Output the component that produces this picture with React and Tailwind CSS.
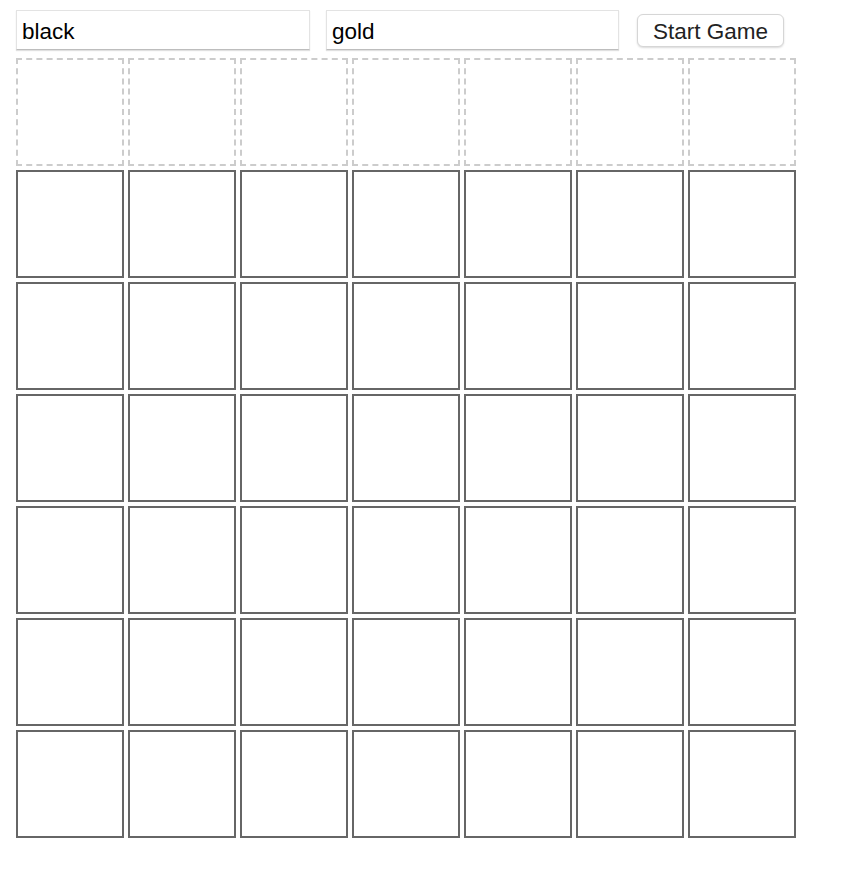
export default function App() {
  const cols = [0, 1, 2, 3, 4, 5, 6];
  const rows = [0, 1, 2, 3, 4, 5];
  return (
    <div className="bg-white w-[846px] h-[876px]" style={{ fontFamily: '"Liberation Sans", Arial, sans-serif' }}>
      <div className="flex items-center pl-4 pt-[10px] h-[50px]">
        <input
          defaultValue="black"
          className="w-[294px] h-[40px] border border-[#e3e3e3] border-b-[#bdbdbd] shadow-[0_1px_1px_rgba(0,0,0,0.12)] pl-[5px] pt-[4px] text-[22.5px] text-black outline-none"
          style={{ fontFamily: '"Liberation Sans", Arial, sans-serif' }}
        />
        <input
          defaultValue="gold"
          className="ml-4 w-[293px] h-[40px] border border-[#e3e3e3] border-b-[#bdbdbd] shadow-[0_1px_1px_rgba(0,0,0,0.12)] pl-[5px] pt-[4px] text-[22.5px] text-black outline-none"
          style={{ fontFamily: '"Liberation Sans", Arial, sans-serif' }}
        />
        <button className="ml-[18px] w-[147px] h-[33px] rounded-[6px] border border-[#d6d6d6] bg-white shadow-[0_1px_2px_rgba(0,0,0,0.15)] pt-[5px] text-[22.5px] text-[#222] leading-none">
          Start Game
        </button>
      </div>
      <div className="pl-4 pt-2 flex flex-col gap-1">
        <div className="flex gap-1">
          {cols.map((c) => (
            <div key={c} className="w-[108px] h-[108px] border-2 border-dashed border-[#cccccc]" />
          ))}
        </div>
        {rows.map((r) => (
          <div key={r} className="flex gap-1">
            {cols.map((c) => (
              <div key={c} className="w-[108px] h-[108px] border-2 border-solid border-[#666666]" />
            ))}
          </div>
        ))}
      </div>
    </div>
  );
}
